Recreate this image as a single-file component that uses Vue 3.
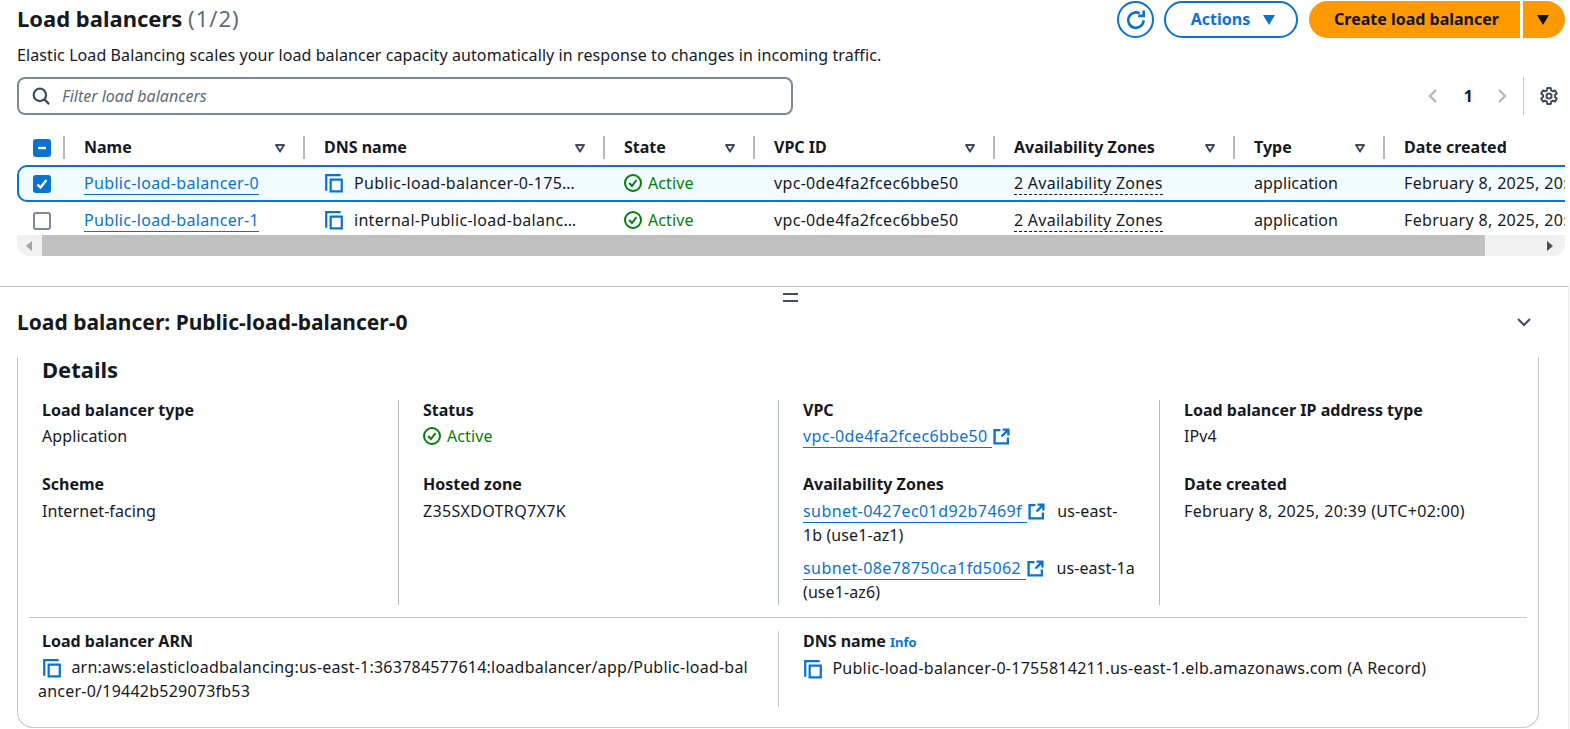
<script setup>
const columns = [
  { label: 'Name', sort: true },
  { label: 'DNS name', sort: true },
  { label: 'State', sort: true },
  { label: 'VPC ID', sort: true },
  { label: 'Availability Zones', sort: true },
  { label: 'Type', sort: true },
  { label: 'Date created', sort: false }
]

const rows = [
  { name: 'Public-load-balancer-0', dns: 'Public-load-balancer-0-1755814211.us-east-1.elb.amazonaws.com', selected: true },
  { name: 'Public-load-balancer-1', dns: 'internal-Public-load-balancer-1-1234567890.us-east-1.elb.amazonaws.com', selected: false }
]
</script>

<template>
  <div class="page">
    <div class="top">
      <header class="head">
        <h1 class="title">Load balancers <span class="count">(1/2)</span></h1>
        <div class="actions">
          <button class="btn-refresh" aria-label="Refresh">
            <svg width="22" height="22" viewBox="0 0 16 16" fill="none" stroke="currentColor" stroke-width="1.9">
              <path d="M13.5 8.2A5.6 5.6 0 1 1 10.6 3.2" />
              <path d="M13.6 1v4h-4" stroke-linejoin="miter" />
            </svg>
          </button>
          <button class="btn-actions">Actions <i class="caret"></i></button>
          <div class="split">
            <button class="btn-create">Create load balancer</button>
            <button class="btn-more" aria-label="More"><i class="caret dark"></i></button>
          </div>
        </div>
      </header>
      <p class="desc">Elastic Load Balancing scales your load balancer capacity automatically in response to changes in incoming traffic.</p>

      <div class="tools">
        <label class="filter">
          <svg width="18" height="18" viewBox="0 0 16 16" fill="none" stroke="#414d5c" stroke-width="2">
            <circle cx="7" cy="7" r="5.5" />
            <path d="M11 11l4.2 4.2" />
          </svg>
          <input class="filter-input" type="text" placeholder="Filter load balancers" />
        </label>
        <nav class="pager">
          <svg width="16" height="16" viewBox="0 0 16 16" fill="none" stroke="#b4b8bf" stroke-width="2.4"><path d="M11 2L5 8l6 6" /></svg>
          <b class="page-num">1</b>
          <svg width="16" height="16" viewBox="0 0 16 16" fill="none" stroke="#b4b8bf" stroke-width="2.4"><path d="M5 2l6 6-6 6" /></svg>
          <span class="pager-line"></span>
          <svg width="20" height="20" viewBox="0 0 20 20" fill="none" stroke="#414d5c" stroke-width="2" stroke-linejoin="round">
            <path d="M8.3 2h3.4l.5 2.4 1.6.9 2.3-.8 1.7 3-1.8 1.6v1.800l1.800 1.600-1.700 3-2.300-.8-1.600.9-.5 2.400H8.300l-.5-2.400-1.600-.9-2.300.8-1.700-3 1.800-1.600V9.100L2.200 7.500l1.700-3 2.300.8 1.600-.9z" />
            <circle cx="10" cy="10" r="2.600" />
          </svg>
        </nav>
      </div>

      <div class="table">
        <div class="tr thead">
          <div class="cell check-cell">
            <span class="box on">
              <svg width="18" height="18" viewBox="0 0 18 18"><path d="M5 9h8" stroke="#fff" stroke-width="2.400" /></svg>
            </span>
            <span class="col-line"></span>
          </div>
          <div v-for="col in columns" :key="col.label" class="cell th">
            <span>{{ col.label }}</span>
            <svg v-if="col.sort" class="sort" width="12" height="12" viewBox="0 0 12 12" fill="none" stroke="#414d5c" stroke-width="2" stroke-linejoin="round"><path d="M2 3h8L6 9.500z" /></svg>
            <span v-if="col.sort" class="col-line"></span>
          </div>
        </div>
        <div v-for="row in rows" :key="row.name" class="tr" :class="{ selected: row.selected }">
          <div class="cell check-cell">
            <span class="box" :class="{ on: row.selected }">
              <svg v-if="row.selected" width="18" height="18" viewBox="0 0 18 18" fill="none"><path d="M4.500 9.500l3 3 6-7.500" stroke="#fff" stroke-width="2.400" /></svg>
            </span>
          </div>
          <div class="cell"><a class="link wide">{{ row.name }}</a></div>
          <div class="cell dns">
            <svg class="copy" width="20" height="20" viewBox="0 0 18 18" fill="none" stroke="#0972d3" stroke-width="2"><path d="M2 16V2h13" /><path d="M6 6h10v10.500H6z" /></svg>
            <span class="ellipsis">{{ row.dns }}</span>
          </div>
          <div class="cell ok">
            <svg width="18" height="18" viewBox="0 0 18 18" fill="none" stroke="#037f0c" stroke-width="2"><circle cx="9" cy="9" r="8" /><path d="M5.200 9l2.800 3 4.500-6" /></svg>
            Active
          </div>
          <div class="cell wide">vpc-0de4fa2fcec6bbe50</div>
          <div class="cell"><span class="dotted">2 Availability Zones</span></div>
          <div class="cell">application</div>
          <div class="cell wide">February 8, 2025, 20:39 (UTC+02:00)</div>
        </div>
        <div class="scroll">
          <i class="arrow left"></i>
          <div class="thumb"></div>
          <i class="arrow right"></i>
        </div>
      </div>
    </div>

    <section class="panel">
      <div class="handle"></div>
      <div class="panel-head">
        <h2 class="panel-title">Load balancer: Public-load-balancer-0</h2>
        <svg width="16" height="16" viewBox="0 0 16 16" fill="none" stroke="#414d5c" stroke-width="2"><path d="M2 5l6 6 6-6" /></svg>
      </div>

      <div class="card">
        <h3 class="card-title">Details</h3>
        <div class="grid">
          <div class="col">
            <div class="label">Load balancer type</div>
            <div class="value">Application</div>
            <div class="label gap">Scheme</div>
            <div class="value">Internet-facing</div>
          </div>
          <div class="col">
            <div class="label">Status</div>
            <div class="value ok">
              <svg width="18" height="18" viewBox="0 0 18 18" fill="none" stroke="#037f0c" stroke-width="2"><circle cx="9" cy="9" r="8" /><path d="M5.200 9l2.800 3 4.500-6" /></svg>
              Active
            </div>
            <div class="label gap">Hosted zone</div>
            <div class="value wide">Z35SXDOTRQ7X7K</div>
          </div>
          <div class="col">
            <div class="label">VPC</div>
            <div class="value">
              <a class="link wide">vpc-0de4fa2fcec6bbe50 </a>
              <svg class="ext" width="17" height="17" viewBox="0 0 16 16" fill="none" stroke="#0972d3" stroke-width="2.200"><path d="M7 2H1.500v12.500H14V9" /><path d="M8 8l6-6M9 1.500h5.500V7" /></svg>
            </div>
            <div class="label gap">Availability Zones</div>
            <div class="zone">
              <a class="link subnet">subnet-0427ec01d92b7469f </a>
              <svg class="ext" width="17" height="17" viewBox="0 0 16 16" fill="none" stroke="#0972d3" stroke-width="2.200"><path d="M7 2H1.500v12.500H14V9" /><path d="M8 8l6-6M9 1.500h5.500V7" /></svg>
              &nbsp; us-east-<br />1b (use1-az1)
            </div>
            <div class="zone next">
              <a class="link subnet">subnet-08e78750ca1fd5062 </a>
              <svg class="ext" width="17" height="17" viewBox="0 0 16 16" fill="none" stroke="#0972d3" stroke-width="2.200"><path d="M7 2H1.500v12.500H14V9" /><path d="M8 8l6-6M9 1.500h5.500V7" /></svg>
              &nbsp; us-east-1a (use1-az6)
            </div>
          </div>
          <div class="col">
            <div class="label">Load balancer IP address type</div>
            <div class="value">IPv4</div>
            <div class="label gap">Date created</div>
            <div class="value wide">February 8, 2025, 20:39 (UTC+02:00)</div>
          </div>
        </div>
        <div class="rule"></div>
        <div class="lower">
          <div class="low-col arn">
            <div class="label">Load balancer ARN</div>
            <div class="low-value breakall">
              <svg class="copy" width="20" height="20" viewBox="0 0 18 18" fill="none" stroke="#0972d3" stroke-width="2"><path d="M2 16V2h13" /><path d="M6 6h10v10.500H6z" /></svg>
              arn:aws:elasticloadbalancing:us-east-1:363784577614:loadbalancer/app/Public-load-balancer-0/19442b529073fb53
            </div>
          </div>
          <div class="low-col">
            <div class="label">DNS name <a class="info">Info</a></div>
            <div class="low-value">
              <svg class="copy" width="20" height="20" viewBox="0 0 18 18" fill="none" stroke="#0972d3" stroke-width="2"><path d="M2 16V2h13" /><path d="M6 6h10v10.500H6z" /></svg>
              Public-load-balancer-0-1755814211.us-east-1.elb.amazonaws.com (A Record)
            </div>
          </div>
        </div>
      </div>
    </section>
  </div>
</template>

<style>
html, body {
  margin: 0;
  background: #fff;
}
</style>

<style scoped>
.page {
  width: 1570px;
  height: 729px;
  overflow: hidden;
  font-family: "Noto Sans", sans-serif;
  font-size: 16px;
  line-height: 20px;
  letter-spacing: 0.09px;
  color: #16191f;
  box-sizing: border-box;
}

.wide {
  letter-spacing: 0.33px;
}

.top {
  height: 286px;
  padding: 1px 5px 0 17px;
  box-sizing: border-box;
}

.head {
  display: flex;
  justify-content: space-between;
  height: 37px;
}

.title {
  margin: 0;
  font-size: 22px;
  line-height: 34px;
  font-weight: 700;
  letter-spacing: 0;
}

.count {
  font-weight: 400;
  letter-spacing: 1px;
  color: #5f6b7a;
}

.actions {
  display: flex;
  gap: 10px;
}

button {
  font: inherit;
  font-weight: 700;
  letter-spacing: 0;
  cursor: pointer;
}

.btn-refresh {
  width: 37px;
  height: 37px;
  padding: 0;
  border: 2px solid #0972d3;
  border-radius: 50%;
  background: #fff;
  color: #0972d3;
  display: flex;
  align-items: center;
  justify-content: center;
}

.btn-actions {
  width: 134px;
  height: 37px;
  padding: 0 0 2px 4px;
  border: 2px solid #0972d3;
  border-radius: 20px;
  background: #fff;
  color: #0972d3;
}

.caret {
  display: inline-block;
  margin-left: 9px;
  border-left: 6px solid transparent;
  border-right: 6px solid transparent;
  border-top: 10px solid #0972d3;
}

.caret.dark {
  margin: 0;
  border-top-color: #0f141a;
}

.split {
  display: flex;
  gap: 3px;
  margin-left: 1px;
}

.btn-create,
.btn-more {
  height: 37px;
  padding: 0 0 2px;
  border: 0;
  background: #ff9900;
  color: #0f141a;
}

.btn-create {
  width: 211px;
  padding-left: 4px;
  border-radius: 20px 0 0 20px;
}

.btn-more {
  width: 42px;
  padding-right: 2px;
  border-radius: 0 20px 20px 0;
}

.desc {
  margin: 7px 0 0;
}

.tools {
  display: flex;
  align-items: center;
  justify-content: space-between;
  margin-top: 12px;
}

.filter {
  width: 776px;
  height: 38px;
  box-sizing: border-box;
  border: 2px solid #7d8998;
  border-radius: 8px;
  display: flex;
  align-items: center;
  gap: 12px;
  padding-left: 13px;
}

.filter-input {
  flex: 1;
  border: 0;
  outline: 0;
  padding: 0;
  font: italic 16px "Noto Sans", sans-serif;
  background: transparent;
}

.filter-input::placeholder {
  color: #5f6b7a;
}

.pager {
  display: flex;
  align-items: center;
  padding-right: 6px;
}

.page-num {
  margin: 0 21px 0 23px;
}

.pager-line {
  width: 1px;
  height: 38px;
  margin: 0 15px 0 13px;
  background: #c6c6cd;
}

.table {
  position: relative;
  margin-top: 15px;
  overflow: hidden;
}

.tr {
  display: grid;
  grid-template-columns: 48px 240px 300px 150px 240px 240px 150px 1fr;
  height: 37px;
  align-items: center;
  box-sizing: border-box;
}

.thead {
  height: 35px;
  font-weight: 700;
  letter-spacing: 0;
}

.cell {
  position: relative;
  padding: 0 0 2px 19px;
  white-space: nowrap;
  min-width: 0;
}

.th {
  display: flex;
  align-items: center;
}

.sort {
  position: absolute;
  right: 19px;
  top: 5px;
}

.col-line {
  position: absolute;
  right: 0;
  top: 50%;
  width: 2px;
  height: 23px;
  margin-top: -12px;
  background: #b4b8bf;
}

.check-cell {
  padding: 0 0 0 16px;
  height: 18px;
}

.box {
  display: block;
  width: 18px;
  height: 18px;
  box-sizing: border-box;
  border: 2px solid #7d8998;
  border-radius: 3px;
}

.box svg {
  display: block;
  margin: -2px;
}

.box.on {
  background: #0972d3;
  border-color: #0972d3;
}

.selected {
  background: #f2fbff;
  box-shadow: inset 0 0 0 2px #0972d3;
  border-radius: 10px 0 0 10px;
  margin-right: -20px;
}

.link {
  color: #0972d3;
  border-bottom: 1px solid #0972d3;
  text-decoration: none;
}

.subnet {
  letter-spacing: 0.42px;
}

.dns {
  display: flex;
  align-items: center;
  gap: 10px;
}

.dns .copy {
  margin-right: 0;
}

.ellipsis {
  overflow: hidden;
  text-overflow: ellipsis;
  letter-spacing: 0.3px;
  padding-right: 22px;
}

.ok {
  display: flex;
  align-items: center;
  gap: 6px;
  color: #037f0c;
}

.dotted {
  letter-spacing: 0.25px;
  border-bottom: 1px dashed #16191f;
}

.scroll {
  position: relative;
  height: 21px;
  margin-top: -4px;
  background: #f1f1f1;
  border-radius: 0 0 12px 12px;
}

.thumb {
  position: absolute;
  left: 25px;
  top: 0;
  width: 1443px;
  height: 21px;
  background: #c1c1c1;
}

.arrow {
  position: absolute;
  top: 6px;
  border-top: 5px solid transparent;
  border-bottom: 5px solid transparent;
}

.arrow.left {
  left: 9px;
  border-right: 6px solid #a3a3a3;
}

.arrow.right {
  right: 12px;
  border-left: 6px solid #505050;
}

.panel {
  position: relative;
  height: 443px;
  margin-right: 1px;
  border-top: 1px solid #c6c6cd;
  border-right: 1px solid #e9ebed;
  box-sizing: border-box;
  padding: 0 29px 0 17px;
}

.handle {
  position: absolute;
  left: 783px;
  top: 6px;
  width: 15px;
  height: 9px;
  box-sizing: border-box;
  border-top: 2px solid #414d5c;
  border-bottom: 2px solid #414d5c;
}

.panel-head {
  display: flex;
  align-items: center;
  justify-content: space-between;
  height: 70px;
  padding-right: 7px;
}

.panel-title {
  margin: 0;
  font-size: 21px;
  font-weight: 700;
  letter-spacing: 0;
}

.card {
  height: 371px;
  box-sizing: border-box;
  border: 1px solid #c6c6cd;
  border-top: 0;
  border-radius: 0 0 16px 16px;
}

.card-title {
  margin: 0 0 0 24px;
  font-size: 22px;
  line-height: 24px;
  font-weight: 700;
  letter-spacing: 0;
}

.grid {
  display: grid;
  grid-template-columns: 380px 380px 381px 1fr;
  height: 205px;
  margin-top: 19px;
}

.col {
  padding: 0 16px 0 24px;
  border-left: 1px solid #b4b8bf;
}

.col:first-child {
  border-left: 0;
}

.label {
  font-weight: 700;
  line-height: 20px;
  letter-spacing: 0;
}

.value {
  margin-top: 3px;
  line-height: 26px;
}

.gap {
  margin-top: 25px;
}

.gap + .value {
  margin-top: 4px;
}

.zone {
  margin-top: 5px;
  line-height: 24px;
}

.zone.next {
  margin-top: 9px;
}

.ext {
  margin-left: 1px;
  vertical-align: -3px;
}

.copy {
  flex: none;
  vertical-align: -5px;
  margin-right: 5px;
}

.rule {
  height: 1px;
  margin: 12px 11px 0 11px;
  background: #c6c6cd;
}

.lower {
  display: grid;
  grid-template-columns: 761px 1fr;
  margin-top: 13px;
}

.low-col {
  padding-left: 24px;
  height: 76px;
}

.low-value {
  margin-top: 4px;
  line-height: 24px;
  letter-spacing: 0.26px;
}

.arn {
  padding: 0 28px 0 20px;
  border-right: 1px solid #c6c6cd;
}

.arn .label {
  padding-left: 4px;
}

.breakall {
  word-break: break-all;
  letter-spacing: 0.23px;
}

.arn .copy {
  margin-left: 4px;
}

.info {
  font-size: 13px;
  color: #0972d3;
}
</style>
